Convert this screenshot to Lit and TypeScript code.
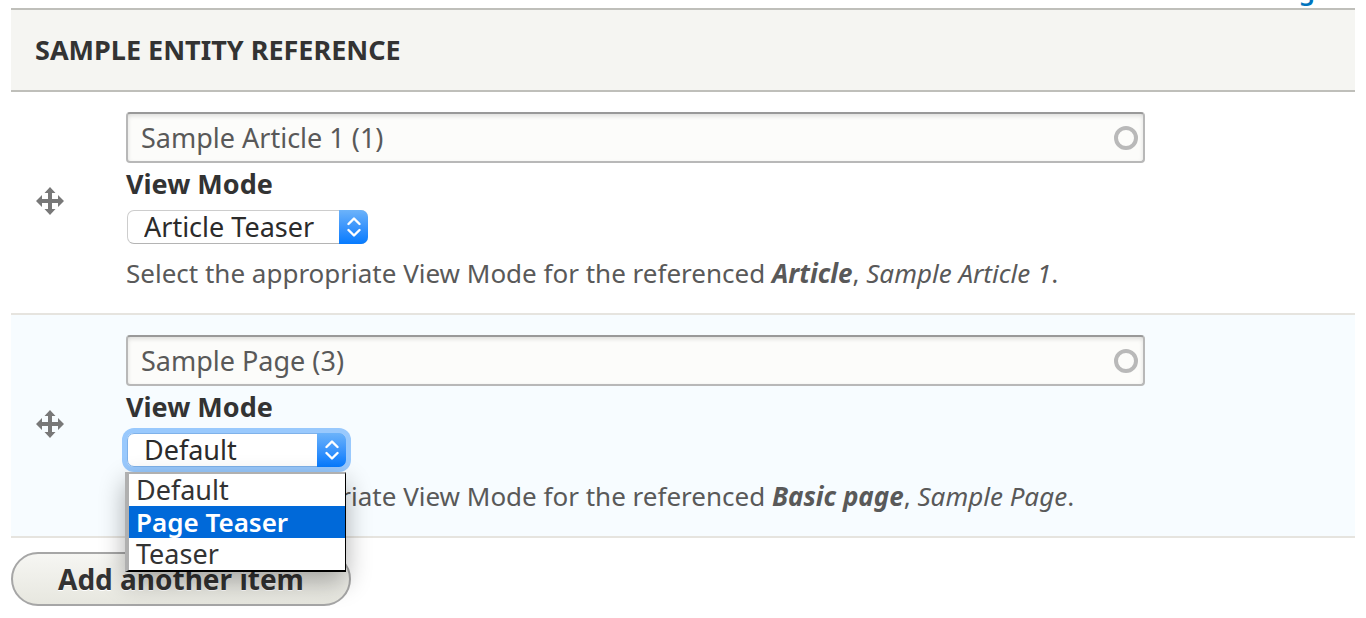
import { LitElement, html, css, svg, nothing } from "lit";
import { customElement, property } from "lit/decorators.js";

interface ReferenceItem {
  id: string;
  value: string;
  bundle: string;
  title: string;
  modes: string[];
  selected: string;
  open?: boolean;
  highlighted?: string;
}

const ITEMS: ReferenceItem[] = [
  {
    id: "article",
    value: "Sample Article 1 (1)",
    bundle: "Article",
    title: "Sample Article 1",
    modes: ["Default", "Article Teaser", "Teaser"],
    selected: "Article Teaser",
  },
  {
    id: "page",
    value: "Sample Page (3)",
    bundle: "Basic page",
    title: "Sample Page",
    modes: ["Default", "Page Teaser", "Teaser"],
    selected: "Default",
    open: true,
    highlighted: "Page Teaser",
  },
];

const moveIcon = svg`<svg width="28" height="28" viewBox="0 0 28 28" aria-hidden="true">
  <path fill="#787878" d="M14 0 19.5 6H16V12H22V8L28 14 22 20V16H16V22H19.5L14 28 8.5 22H12V16H6V20L0 14 6 8V12H12V6H8.5Z"/>
</svg>`;

/** Drop-down with a blue stepper cap; shows its option list while open. */
@customElement("mode-select")
export class ModeSelect extends LitElement {
  @property({ attribute: false }) item!: ReferenceItem;

  static styles = css`
    :host {
      display: block;
      color: #333;
    }
    .label {
      display: block;
      font-weight: 700;
      line-height: 36px;
      padding: 3px 0 8px;
    }
    .control {
      position: relative;
      display: inline-grid;
      vertical-align: top;
      margin-left: 1px;
      border-radius: 7px;
    }
    .control.focused {
      box-shadow: 0 0 0 5px #99c9fd;
    }
    .select {
      grid-area: 1 / 1;
      appearance: none;
      box-sizing: border-box;
      height: 34px;
      margin: 0;
      padding: 0 52px 0 16px;
      border: 1px solid #cdcdcd;
      border-bottom-color: #b4b4b4;
      border-radius: 7px;
      background: #fff;
      color: #2b2b2b;
      font: inherit;
      line-height: 32px;
      outline: none;
    }
    .focused .select {
      border-color: #7fb2ea;
      padding-right: 47px;
    }
    .cap {
      grid-area: 1 / 1;
      justify-self: end;
      display: grid;
      place-items: center;
      width: 29px;
      border-radius: 0 7px 7px 0;
      background: linear-gradient(#6cb3fa, #3b95fc 50%, #067bff);
      pointer-events: none;
    }
    .menu {
      position: absolute;
      z-index: 2;
      top: 39px;
      left: -2px;
      right: 0;
      margin: 0;
      padding: 0;
      list-style: none;
      background: #fff;
      border-style: solid;
      border-width: 2px 1px 2px 4px;
      border-color: #b0b0b0 #000 #000 #b0b0b0;
      box-shadow: 0 10px 24px rgba(0, 0, 0, 0.32);
      line-height: 32px;
    }
    .option {
      padding: 0 7px;
      white-space: nowrap;
    }
    .option.active {
      background: #0069d9;
      color: #fff;
      font-size: 26px;
      font-weight: 600;
    }
  `;

  render() {
    const { id, modes, selected, open, highlighted } = this.item;
    return html`
      <label class="label" for="mode-${id}">View Mode</label>
      <div class="control ${open ? "focused" : ""}">
        <select class="select" id="mode-${id}">
          ${modes.map(
            (m) => html`<option ?selected=${m === selected}>${m}</option>`
          )}
        </select>
        <span class="cap">
          <svg width="16" height="20" viewBox="0 0 16 20" fill="none" stroke="#fff" stroke-width="2.4" stroke-linecap="round" stroke-linejoin="round" aria-hidden="true">
            <path d="M2.5 7 8 1.5 13.5 7M2.5 13 8 18.5 13.5 13" />
          </svg>
        </span>
        ${open
          ? html`<ul class="menu" role="listbox" aria-label="View Mode">
              ${modes.map(
                (m) => html`<li
                  class="option ${m === highlighted ? "active" : ""}"
                  role="option"
                  aria-selected=${m === highlighted ? "true" : "false"}
                >${m}</li>`
              )}
            </ul>`
          : nothing}
      </div>
    `;
  }
}

@customElement("app-root")
export class AppRoot extends LitElement {
  static styles = css`
    :host {
      display: block;
      padding: 0 11px;
      background: #fff;
      color: #333;
      font-family: "Noto Sans", "Open Sans", sans-serif;
      font-size: 27px;
    }
    .toolbar {
      display: flex;
      justify-content: flex-end;
      align-items: flex-end;
      height: 8px;
      overflow: hidden;
      font-size: 26px;
      line-height: 36px;
    }
    .weights {
      color: #0074bd;
      font-weight: 600;
      text-decoration: none;
    }
    .table {
      width: 100%;
      border-collapse: separate;
      border-spacing: 0;
    }
    .heading {
      padding: 22px 24px;
      border: solid #bfbfba;
      border-width: 2px 0;
      background: #f5f5f2;
      line-height: 36px;
      text-align: left;
      text-transform: uppercase;
    }
    .cell {
      padding: 20px 24px 22px 0;
      border-bottom: 2px solid #e6e4df;
      vertical-align: middle;
    }
    .cell.drag {
      width: 91px;
      padding: 0 0 4px 24px;
    }
    .row.changed .cell {
      background: #f7fcff;
    }
    .handle {
      display: block;
      width: fit-content;
      padding: 1px;
      line-height: 0;
    }
    .field {
      display: grid;
      max-width: 1019px;
    }
    .input {
      grid-area: 1 / 1;
      box-sizing: border-box;
      width: 100%;
      height: 51px;
      margin: 0;
      padding: 0 40px 0 13px;
      border: 2px solid #b8b8b8;
      border-top-color: #999;
      border-radius: 4px;
      background: #fcfcfa;
      box-shadow: inset 0 2px 4px rgba(0, 0, 0, 0.125);
      color: #595959;
      font: inherit;
      outline: none;
    }
    .throbber {
      grid-area: 1 / 1;
      place-self: center end;
      box-sizing: border-box;
      width: 24px;
      height: 24px;
      margin-right: 7px;
      border: 4px solid #b9b9b9;
      border-radius: 50%;
    }
    .description {
      margin-top: 8px;
      color: #595959;
      font-size: 26px;
      line-height: 36px;
    }
    .add {
      display: block;
      margin: 14px 0 10px;
      padding: 7px 45px;
      border: 2px solid #a6a6a6;
      border-radius: 27px;
      background: linear-gradient(#f6f6f3, #e7e7df);
      color: #333;
      font: inherit;
      font-size: 28px;
      font-weight: 700;
      line-height: 36px;
      text-shadow: 0 1px #fff;
    }
  `;

  private renderRow(item: ReferenceItem) {
    return html`<tr class="row ${item.open ? "changed" : ""}">
      <td class="cell drag">
        <a class="handle" href="#" aria-label="Drag to re-order">${moveIcon}</a>
      </td>
      <td class="cell">
        <div class="field">
          <input class="input" type="text" aria-label="Sample Entity Reference" .value=${item.value} />
          <span class="throbber"></span>
        </div>
        <mode-select .item=${item}></mode-select>
        <div class="description">
          Select the appropriate View Mode for the referenced
          <em><strong>${item.bundle}</strong></em>, <em>${item.title}</em>.
        </div>
      </td>
    </tr>`;
  }

  render() {
    return html`
      <div class="toolbar"><a class="weights" href="#">Show row weights</a></div>
      <table class="table">
        <thead>
          <tr><th class="heading" colspan="2">Sample Entity Reference</th></tr>
        </thead>
        <tbody>
          ${ITEMS.map((item) => this.renderRow(item))}
        </tbody>
      </table>
      <button class="add" type="button">Add another item</button>
    `;
  }
}
